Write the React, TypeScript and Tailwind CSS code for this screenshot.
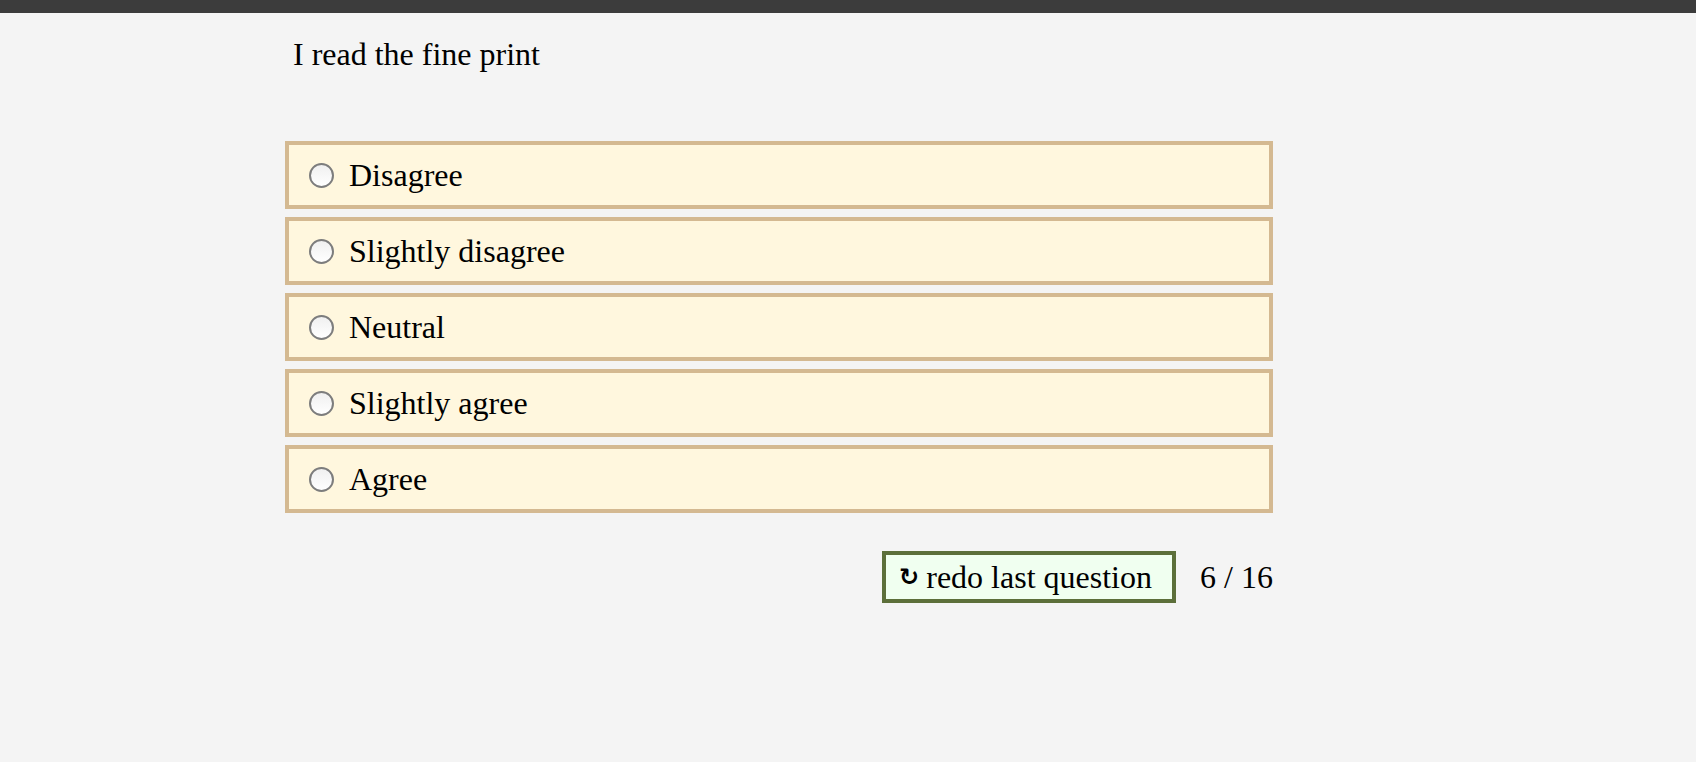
import React from "react";

const options = ["Disagree", "Slightly disagree", "Neutral", "Slightly agree", "Agree"];

function Radio() {
  return (
    <span className="block h-[25px] w-[25px] shrink-0 rounded-full border-2 border-[#7d7d7d] bg-gradient-to-b from-[#f0f0f0] to-white" />
  );
}

export default function App() {
  return (
    <div
      className="min-h-screen bg-[#f4f4f4] text-black"
      style={{ fontFamily: '"Liberation Serif", "Times New Roman", serif' }}
    >
      <div className="h-[13px] bg-[#3c3c3c]" />
      <div className="ml-[285px] w-[988px]">
        <div className="mt-[23px] pl-[8px] text-[32px] leading-[37px]">I read the fine print</div>
        <div className="mt-[68px] flex flex-col gap-[8px]">
          {options.map((o) => (
            <label
              key={o}
              className="flex h-[68px] items-center border-4 border-[#d4b991] bg-[#fff7de] pl-[20px]"
            >
              <Radio />
              <span className="ml-[15px] text-[32px] leading-[37px]">{o}</span>
            </label>
          ))}
        </div>
        <div className="mt-[38px] flex items-center justify-end gap-[24px]">
          <button className="flex h-[52px] w-[294px] items-center border-4 border-[#5c6f3a] bg-[#f0fff0] pl-[13px] text-[32px] leading-[37px]">
            <span className="font-bold text-[24px] font-['DejaVu_Sans',sans-serif]">↻</span>
            <span className="ml-[7px]">redo last question</span>
          </button>
          <span className="text-[32px] leading-[37px]">6 / 16</span>
        </div>
      </div>
    </div>
  );
}
